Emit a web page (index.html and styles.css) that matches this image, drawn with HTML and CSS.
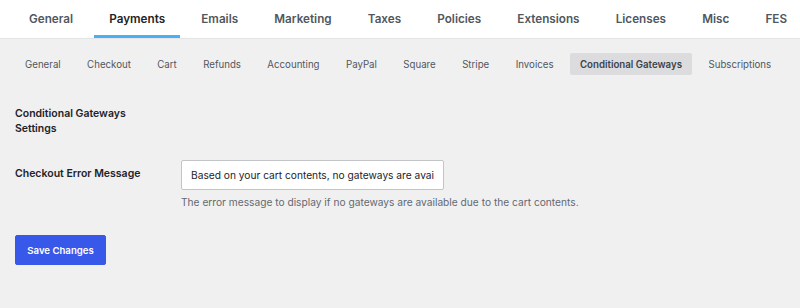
FILE: index.html
```html
<!DOCTYPE html>
<html>
<head>
<meta charset="utf-8">
<link rel="stylesheet" href="styles.css">
</head>
<body>
<nav class="main-tabs">
  <a class="tab">General</a>
  <a class="tab active">Payments</a>
  <a class="tab">Emails</a>
  <a class="tab">Marketing</a>
  <a class="tab">Taxes</a>
  <a class="tab">Policies</a>
  <a class="tab">Extensions</a>
  <a class="tab">Licenses</a>
  <a class="tab">Misc</a>
  <a class="tab">FES</a>
</nav>
<nav class="sub-tabs">
  <a class="sub">General</a>
  <a class="sub">Checkout</a>
  <a class="sub">Cart</a>
  <a class="sub">Refunds</a>
  <a class="sub">Accounting</a>
  <a class="sub">PayPal</a>
  <a class="sub">Square</a>
  <a class="sub">Stripe</a>
  <a class="sub">Invoices</a>
  <a class="sub current">Conditional Gateways</a>
  <a class="sub">Subscriptions</a>
</nav>
<main class="content">
  <h2 class="section-title">Conditional Gateways<br>Settings</h2>
  <div class="field-row">
    <label class="field-label">Checkout Error Message</label>
    <div class="field">
      <input class="text-input" type="text" value="Based on your cart contents, no gateways are available.">
      <p class="description">The error message to display if no gateways are available due to the cart contents.</p>
    </div>
  </div>
  <button class="save">Save Changes</button>
</main>
</body>
</html>
```

FILE: styles.css
```css
* { box-sizing: border-box; }
html, body { margin: 0; padding: 0; }
body {
  background: #f0f0f1;
  font-family: Inter, "Noto Sans", sans-serif;
  color: #1d2327;
  overflow: hidden;
}
.main-tabs {
  display: flex;
  background: #fff;
  height: 39px;
  border-bottom: 1px solid #e4e4e6;
  padding-left: 14px;
  gap: 6.2px;
}
.tab {
  display: flex;
  align-items: center;
  padding: 3px 15px 0;
  font-size: 11.7px;
  font-weight: 600;
  color: #50575e;
  height: 38px;
  border-bottom: 3px solid transparent;
  white-space: nowrap;
}
.tab.active {
  color: #1d2327;
  border-bottom-color: #4ab0f5;
}
.sub-tabs {
  display: flex;
  padding: 14px 0 0 15px;
  gap: 6.4px;
}
.sub {
  display: flex;
  align-items: center;
  height: 22px;
  padding: 0 10px;
  font-size: 9.7px;
  color: #50575e;
  border-radius: 2px;
  white-space: nowrap;
}
.sub.current {
  background: #dcdcde;
  color: #3c434a;
  font-weight: 600;
}
.content {
  padding: 31px 15px 0;
}
.section-title {
  margin: 0;
  font-size: 10.5px;
  font-weight: 600;
  line-height: 15px;
  color: #1d2327;
}
.field-row {
  display: flex;
  margin-top: 24px;
}
.field-label {
  width: 166px;
  font-size: 10.5px;
  font-weight: 600;
  padding-top: 7px;
  color: #1d2327;
}
.text-input {
  width: 263px;
  height: 30px;
  border: 1px solid #c3c4c7;
  border-radius: 2px;
  background: #fff;
  font-family: Inter, "Noto Sans", sans-serif;
  font-size: 10.2px;
  color: #1d2327;
  padding: 0 9px;
  display: block;
}
.description {
  margin: 6px 0 0;
  font-size: 10.2px;
  color: #646970;
}
.save {
  display: block;
  margin-top: 27px;
  width: 91px;
  height: 30px;
  background: #3858e9;
  border: 1px solid #3858e9;
  border-radius: 2px;
  color: #fff;
  font-family: Inter, "Noto Sans", sans-serif;
  font-size: 9.6px;
  font-weight: 600;
  padding: 0;
}
```
